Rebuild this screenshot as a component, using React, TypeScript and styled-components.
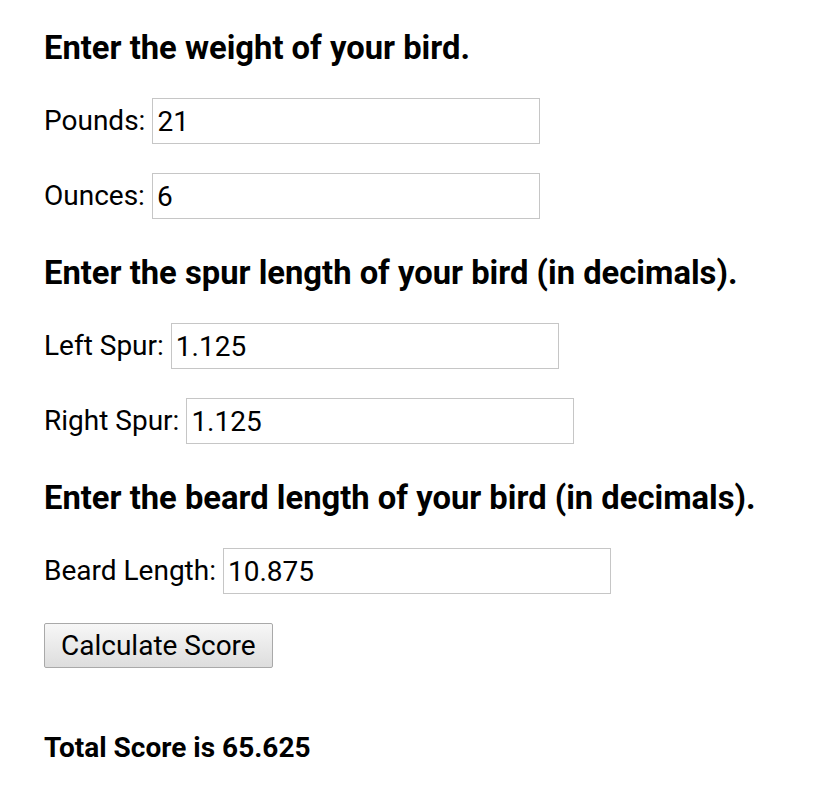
import React, { useState } from 'react';
import styled, { createGlobalStyle } from 'styled-components';

const GlobalStyle = createGlobalStyle`
    body {
        margin: 0;
        background: #ffffff;
        color: #000000;
        font-family: Roboto, "Noto Sans", sans-serif;
        font-size: 28px;
    }
`;

const Page = styled.div`
    padding: 31px 0 40px 44px;
`;

const Heading = styled.h3`
    font-size: 1.17em;
    line-height: 34px;
    font-weight: 700;
    margin: 37px 0 33px;

    &:first-child {
        margin-top: 0;
    }
`;

const Row = styled.div`
    display: flex;
    align-items: center;
    gap: 7px;
    height: 46px;
    margin: 0 0 29px;
`;

const Label = styled.label`
    font-size: 28px;
    line-height: 32px;
    white-space: nowrap;
`;

const Input = styled.input`
    box-sizing: border-box;
    width: 388px;
    height: 46px;
    padding: 0 4px;
    border: 1px solid #c6c6c6;
    outline: none;
    background: #ffffff;
    color: #000000;
    font-family: Roboto, sans-serif;
    font-size: 28px;
`;

const Button = styled.button`
    box-sizing: border-box;
    display: block;
    height: 45px;
    padding: 0 16px;
    border: 1px solid #a9a9a9;
    border-radius: 2px;
    background: linear-gradient(#f7f7f7, #dddddd);
    color: #000000;
    font-family: Roboto, sans-serif;
    font-size: 28px;
    margin: 0;
    cursor: pointer;
`;

const Result = styled.div`
    margin-top: 64px;
    font-size: 28px;
    line-height: 32px;
    font-weight: 700;
`;

type Field = { key: string; label: string };

const sections: { title: string; fields: Field[] }[] = [
  {
    title: 'Enter the weight of your bird.',
    fields: [
      { key: 'pounds', label: 'Pounds:' },
      { key: 'ounces', label: 'Ounces:' },
    ],
  },
  {
    title: 'Enter the spur length of your bird (in decimals).',
    fields: [
      { key: 'left', label: 'Left Spur:' },
      { key: 'right', label: 'Right Spur:' },
    ],
  },
  {
    title: 'Enter the beard length of your bird (in decimals).',
    fields: [{ key: 'beard', label: 'Beard Length:' }],
  },
];

export default function App() {
  const [values, setValues] = useState<Record<string, string>>({
    pounds: '21',
    ounces: '6',
    left: '1.125',
    right: '1.125',
    beard: '10.875',
  });
  const [score, setScore] = useState('65.625');

  const calculate = () => {
    const n = (k: string) => parseFloat(values[k]) || 0;
    const weight = n('pounds') + n('ounces') / 16;
    const total = weight + (n('left') + n('right')) * 10 + n('beard') * 2;
    setScore(String(total));
  };

  return (
    <>
      <GlobalStyle />
      <Page>
        {sections.map((s) => (
          <React.Fragment key={s.title}>
            <Heading>{s.title}</Heading>
            {s.fields.map((f) => (
              <Row key={f.key}>
                <Label htmlFor={f.key}>{f.label}</Label>
                <Input
                  id={f.key}
                  type="text"
                  value={values[f.key]}
                  onChange={(e) => setValues({ ...values, [f.key]: e.target.value })}
                />
              </Row>
            ))}
          </React.Fragment>
        ))}
        <Button type="button" onClick={calculate}>Calculate Score</Button>
        <Result>Total Score is {score}</Result>
      </Page>
    </>
  );
}
